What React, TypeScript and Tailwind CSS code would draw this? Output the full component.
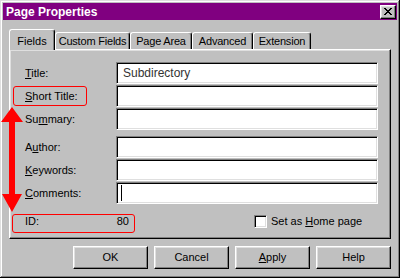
import React from 'react'

const raised =
  'border border-t-white border-l-white border-r-black border-b-black shadow-[inset_-1px_-1px_0_#808080,inset_1px_1px_0_#dfdfdf]'
const sunken =
  'border border-t-[#808080] border-l-[#808080] border-r-white border-b-white shadow-[inset_1px_1px_0_#000,inset_-1px_-1px_0_#dfdfdf]'

const U = ({ children }: { children: React.ReactNode }) => <span className="underline underline-offset-1">{children}</span>

const fields: { label: React.ReactNode; value?: string; cursor?: boolean; gapBefore?: boolean }[] = [
  { label: <><U>T</U>itle:</>, value: 'Subdirectory' },
  { label: <><U>S</U>hort Title:</> },
  { label: <>Su<U>m</U>mary:</> },
  { label: <>A<U>u</U>thor:</>, gapBefore: true },
  { label: <><U>K</U>eywords:</> },
  { label: <><U>C</U>omments:</>, cursor: true },
]

const tabs = [
  { name: 'Custom Fields', w: 'w-[75px]' },
  { name: 'Page Area', w: 'w-[62px]' },
  { name: 'Advanced', w: 'w-[61px]' },
  { name: 'Extension', w: 'w-[58px]' },
]

const App = () => {
  return (
    <div className="relative w-[400px] h-[278px] bg-[#c0c0c0] p-[3px] text-[11px] text-black shadow-[inset_-1px_-1px_0_#000,inset_1px_1px_0_#dfdfdf,inset_-2px_-2px_0_#808080,inset_2px_2px_0_#fff] font-['Liberation_Sans',Arial,sans-serif]">
      {/* title bar */}
      <div className="h-[17px] bg-[#800080] flex items-center justify-between pl-[3px] pr-[1px]">
        <span className="text-white font-bold text-[12px] leading-none">Page Properties</span>
        <div className={`w-[16px] h-[14px] bg-[#c0c0c0] flex items-center justify-center ${raised}`}>
          <svg width="8" height="7" viewBox="0 0 8 7" shapeRendering="crispEdges">
            <path d="M0 0h2v1H0zM6 0h2v1H6zM1 1h2v1H1zM5 1h2v1H5zM2 2h4v1H2zM3 3h2v1H3zM2 4h4v1H2zM1 5h2v1H1zM5 5h2v1H5zM0 6h2v1H0zM6 6h2v1H6z" fill="#000" />
          </svg>
        </div>
      </div>

      <div className="px-[6px] pt-[9px]">
        {/* tabs */}
        <div className="flex items-end h-[20px]">
          <div className="relative z-10 w-[46px] h-[21px] -mb-[1px] bg-[#c0c0c0] border-t border-l border-white border-r border-r-black rounded-t-[3px] shadow-[inset_-1px_0_0_#808080] flex items-start justify-center pt-[3px]">
            Fields
          </div>
          {tabs.map((t) => (
            <div
              key={t.name}
              className={`${t.w} h-[17px] border-t border-l border-white border-r border-r-black rounded-t-[3px] shadow-[inset_-1px_0_0_#808080] flex items-center justify-center tracking-[-0.2px]`}
            >
              {t.name}
            </div>
          ))}
        </div>

        {/* panel */}
        <div className={`h-[190px] pl-[15px] pt-[12px] ${raised}`}>
          {fields.map((f, i) => (
            <div key={i} className={`flex items-center h-[22px] mb-[1px] ${f.gapBefore ? 'mt-[6px]' : ''}`}>
              <div className="w-[91px]">{f.label}</div>
              <div className={`w-[262px] h-[22px] bg-white flex items-center pl-[6px] text-[12px] text-[#333] ${sunken}`}>
                {f.value}
                {f.cursor && <div className="w-px h-[16px] bg-black -ml-[2px]" />}
              </div>
            </div>
          ))}

          <div className="flex items-center h-[20px] mt-[7px]">
            <div className="w-[104px] flex justify-between">
              <span>ID:</span>
              <span>80</span>
            </div>
            <div className="ml-[125px] flex items-center gap-[4px]">
              <div className={`w-[13px] h-[13px] bg-white ${sunken}`} />
              <span>
                Set as <U>H</U>ome page
              </span>
            </div>
          </div>
        </div>

        {/* buttons */}
        <div className="flex justify-end gap-[6px] mt-[7px]">
          {[<>OK</>, <>Cancel</>, <><U>A</U>pply</>, <>Help</>].map((b, i) => (
            <div key={i} className={`w-[75px] h-[23px] flex items-center justify-center ${raised}`}>
              {b}
            </div>
          ))}
        </div>
      </div>

      {/* annotations */}
      <div className="absolute left-[13px] top-[86px] w-[74px] h-[20px] border border-[#ff0000] rounded-[3px]" />
      <div className="absolute left-[12px] top-[214px] w-[123px] h-[19px] border border-[#ff0000] rounded-[3px]" />
      <svg className="absolute left-0 top-0 pointer-events-none" width="30" height="278">
        <polygon points="12,107 23,122 15,122 15,194 22,194 12,212 2,194 9,194 9,122 1,122" fill="#ff0000" />
      </svg>
    </div>
  )
}

export default App
